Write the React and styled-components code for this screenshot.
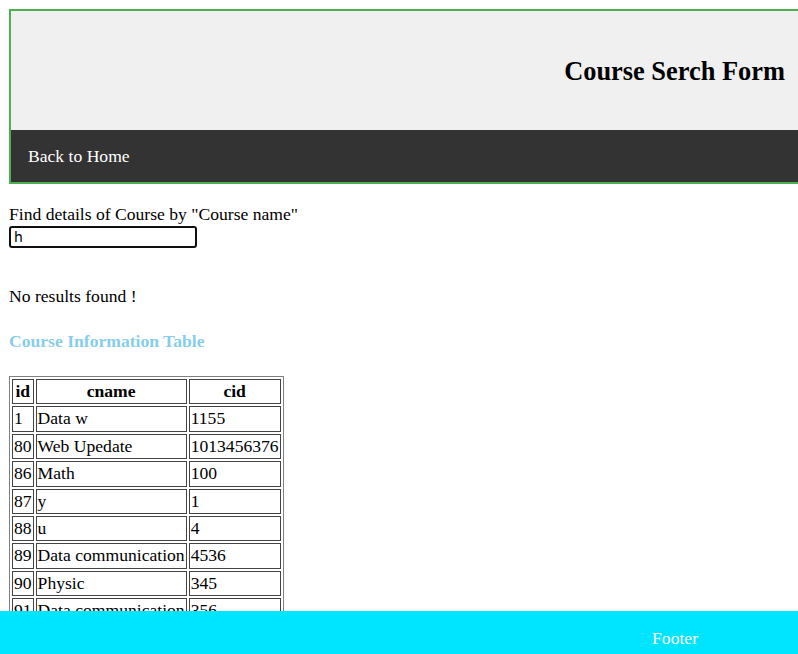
import React from 'react'
import styled, { createGlobalStyle } from 'styled-components'

const courses = [
    { id: 1, cname: 'Data w', cid: '1155' },
    { id: 80, cname: 'Web Upedate', cid: '1013456376' },
    { id: 86, cname: 'Math', cid: '100' },
    { id: 87, cname: 'y', cid: '1' },
    { id: 88, cname: 'u', cid: '4' },
    { id: 89, cname: 'Data communication', cid: '4536' },
    { id: 90, cname: 'Physic', cid: '345' },
    { id: 91, cname: 'Data communication', cid: '356' },
]

const GlobalStyle = createGlobalStyle`
    html, body {
        overflow: hidden;
    }
    body {
        margin: 9px 0 0 9px;
        font-family: "Liberation Serif", "Times New Roman", serif;
        font-size: 17.6px;
        color: #000;
        background: #fff;
    }
`

export default function App() {
    return (
        <>
            <GlobalStyle />
            <Header>
                <Banner>
                    <Title>Course Serch Form</Title>
                </Banner>
                <Nav>
                    <NavLink href="#">Back to Home</NavLink>
                </Nav>
            </Header>
            <Search>
                <Label htmlFor="cname">Find details of Course by "Course name"</Label>
                <Input id="cname" type="text" defaultValue="h" autoFocus />
            </Search>
            <Message>No results found !</Message>
            <TableTitle>Course Information Table</TableTitle>
            <Table>
                <thead>
                    <tr>
                        <Th>id</Th>
                        <Th>cname</Th>
                        <Th>cid</Th>
                    </tr>
                </thead>
                <tbody>
                    {courses.map((c) => (
                        <tr key={c.id}>
                            <Td>{c.id}</Td>
                            <Td>{c.cname}</Td>
                            <Td>{c.cid}</Td>
                        </tr>
                    ))}
                </tbody>
            </Table>
            <Footer>Footer</Footer>
        </>
    )
}

const Header = styled.header`
    display: flex;
    flex-direction: column;
    border: 2px solid #4caf50;
    border-right: none;
`

const Banner = styled.div`
    display: flex;
    justify-content: flex-end;
    align-items: center;
    height: 119px;
    padding-right: 13px;
    background: #f0f0f0;
`

const Title = styled.h2`
    margin: 0;
    font-size: 26.4px;
    font-weight: bold;
    line-height: 30px;
`

const Nav = styled.nav`
    display: flex;
    align-items: center;
    height: 52px;
    padding-left: 17px;
    background: #333333;
`

const NavLink = styled.a`
    color: #ffffff;
    text-decoration: none;
    font-size: 17.6px;
`

const Search = styled.div`
    display: flex;
    flex-direction: column;
    align-items: flex-start;
    gap: 2px;
    margin-top: 21px;
`

const Label = styled.label`
    line-height: 19px;
`

const Input = styled.input`
    box-sizing: border-box;
    width: 188px;
    height: 22px;
    padding: 0 3px;
    border: 2px solid #101010;
    border-radius: 3px;
    outline: none;
    font-family: "DejaVu Sans", sans-serif;
    font-size: 14px;
    color: #000;
`

const Message = styled.p`
    margin: 38px 0 0;
    line-height: 20px;
`

const TableTitle = styled.h4`
    margin: 25px 0 0;
    line-height: 20px;
    font-size: 17.6px;
    color: #87ceeb;
`

const Table = styled.table`
    margin-top: 25px;
    border: 1px solid #808080;
    border-spacing: 2px;
`

const Th = styled.th`
    padding: 1px;
    line-height: 21.4px;
    border: 1px solid #444;
    font-weight: bold;
    text-align: center;
`

const Td = styled.td`
    padding: 1px;
    line-height: 21.4px;
    border: 1px solid #444;
    text-align: left;
`

const Footer = styled.footer`
    position: fixed;
    left: 0;
    right: 0;
    bottom: 0;
    box-sizing: border-box;
    height: 43px;
    padding: 16px 100px 0 0;
    background: #00e5ff;
    color: #ffffff;
    text-align: right;
    line-height: 22px;
`
